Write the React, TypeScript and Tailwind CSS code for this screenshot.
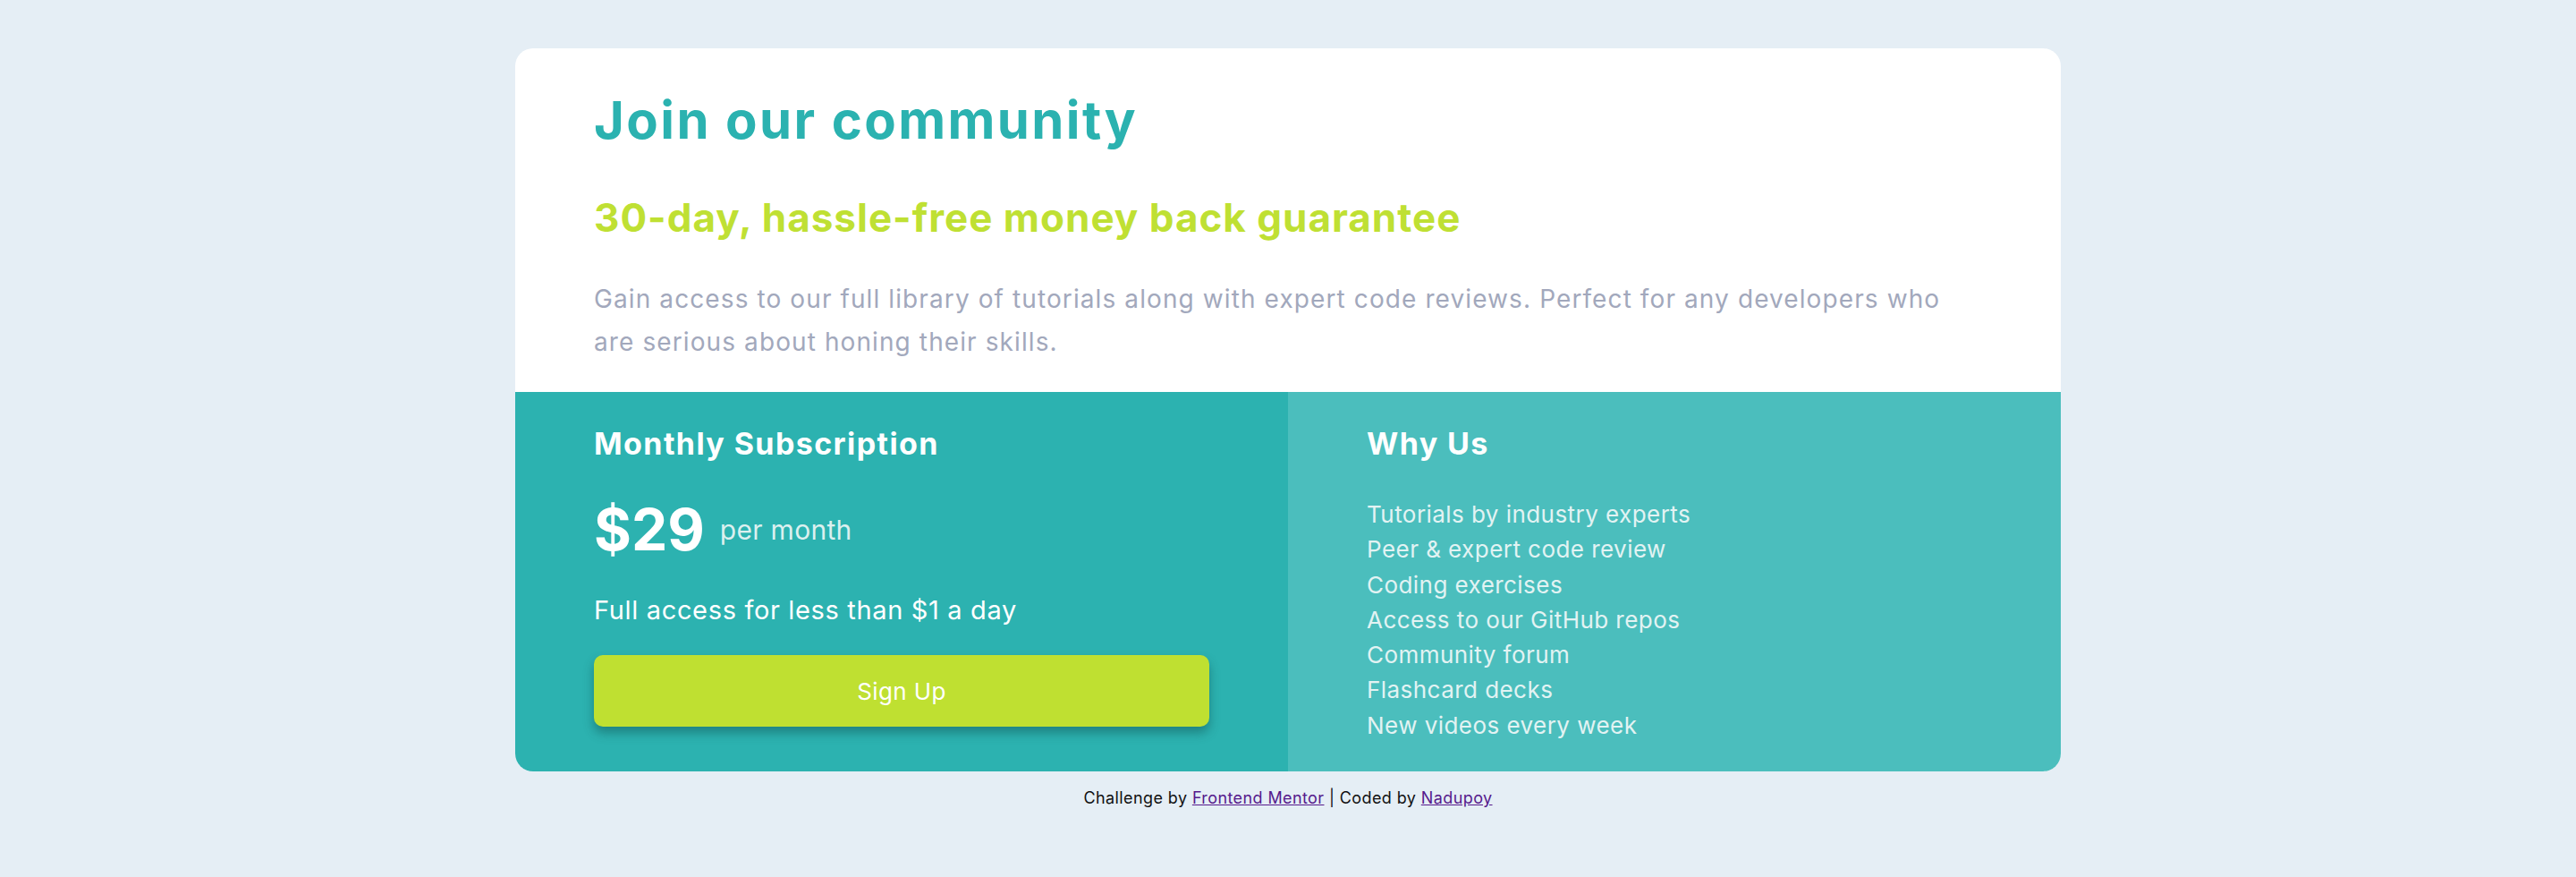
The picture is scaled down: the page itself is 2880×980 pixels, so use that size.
const perks = [
  "Tutorials by industry experts",
  "Peer & expert code review",
  "Coding exercises",
  "Access to our GitHub repos",
  "Community forum",
  "Flashcard decks",
  "New videos every week",
];

export default function App() {
  return (
    <div className="min-h-screen bg-[#e5eef5] pt-[54px] pb-10 font-['Inter',sans-serif]">
      <main className="mx-auto w-[1728px] overflow-hidden rounded-[20px] bg-white">
        {/* top: intro */}
        <section className="px-[88px] pt-[51px] pb-[32px]">
          <h1 className="text-[58px] leading-[58px] font-bold tracking-[2.4px] text-[#2bb2b0]">Join our community</h1>
          <h2 className="mt-[58px] text-[44px] leading-[44px] font-bold tracking-[1px] text-[#bfe033]">
            30-day, hassle-free money back guarantee
          </h2>
          <p className="mt-[45px] max-w-[1525px] text-[28px] leading-[48px] tracking-[1.1px] text-[#a2a8bc]">
            Gain access to our full library of tutorials along with expert code reviews. Perfect for any developers who
            are serious about honing their skills.
          </p>
        </section>

        <div className="grid grid-cols-2">
          {/* subscription */}
          <section className="flex flex-col bg-[#2cb2b0] px-[88px] pt-[41px] pb-[50px] text-white">
            <h3 className="text-[34px] leading-[34px] font-bold tracking-[1.4px]">Monthly Subscription</h3>
            <div className="mt-[47px] flex items-center gap-[17px]">
              <span className="text-[64px] leading-[64px] font-bold">$29</span>
              <span className="text-[30px] leading-[32px] tracking-[0.3px] text-[#dbf0ef]">per month</span>
            </div>
            <p className="mt-[43px] text-[29px] leading-[29px] tracking-[0.65px]">Full access for less than $1 a day</p>
            <button className="mt-[36px] h-[80px] w-full rounded-[10px] bg-[#bfe031] text-[26px] tracking-[0.4px] text-white shadow-[0_7px_12px_rgba(10,60,60,0.4)]">
              Sign Up
            </button>
          </section>

          {/* why us */}
          <section className="bg-[#4bbebd] px-[88px] pt-[41px] pb-[32px] text-white">
            <h3 className="text-[34px] leading-[34px] font-bold tracking-[1.4px]">Why Us</h3>
            <ul className="mt-[42px] text-[26px] leading-[39.3px] tracking-[0.45px] text-[#e2f3f3]">
              {perks.map((p) => (
                <li key={p}>{p}</li>
              ))}
            </ul>
          </section>
        </div>
      </main>

      <footer className="mt-[21px] text-center text-[18px] leading-[18px] tracking-[0.4px] text-[#111]">
        Challenge by{" "}
        <a href="#" className="text-[#561a8c] underline">
          Frontend Mentor
        </a>{" "}
        | Coded by{" "}
        <a href="#" className="text-[#561a8c] underline">
          Nadupoy
        </a>
      </footer>
    </div>
  );
}
